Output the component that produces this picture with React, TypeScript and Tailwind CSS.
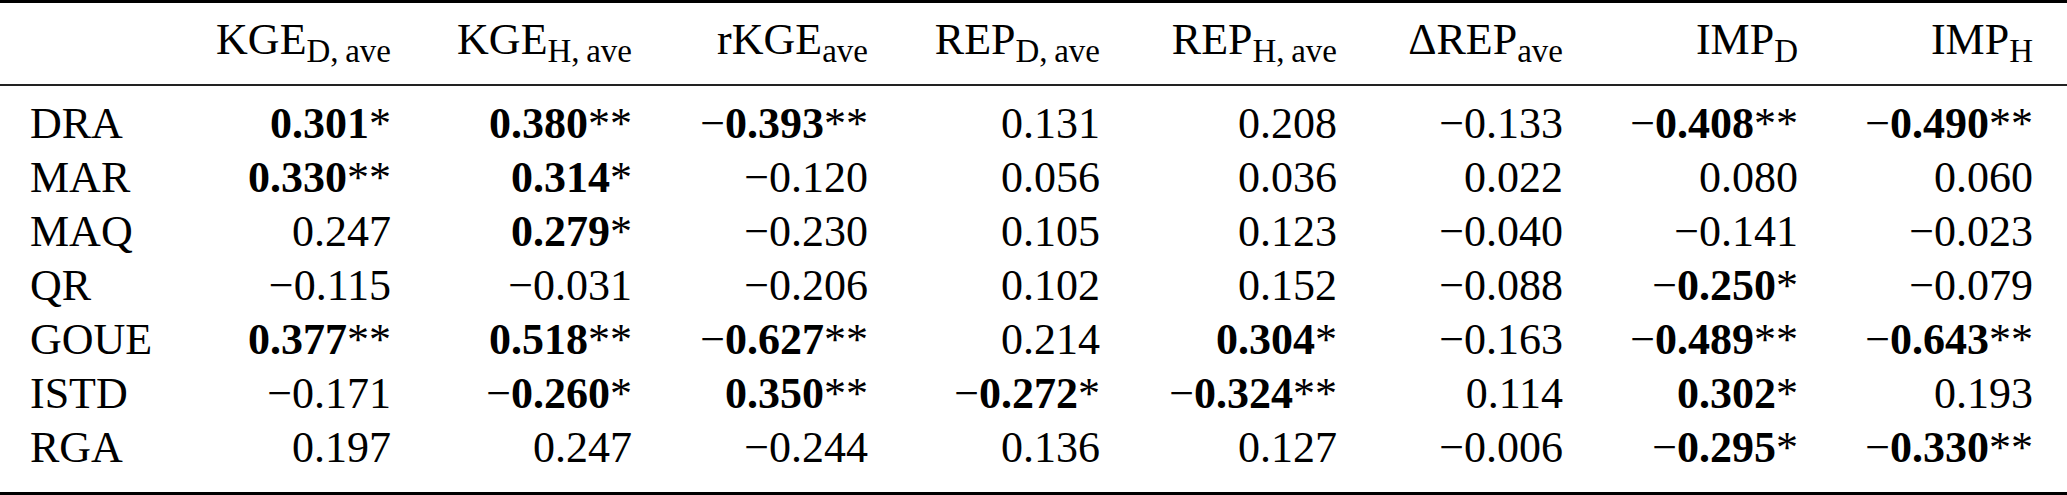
import React from "react";

type Cell = { v: string; b?: boolean; s?: string };

const cols = [
  { main: "KGE", sub: "D,\u2009ave" },
  { main: "KGE", sub: "H,\u2009ave" },
  { main: "rKGE", sub: "ave" },
  { main: "REP", sub: "D,\u2009ave" },
  { main: "REP", sub: "H,\u2009ave" },
  { main: "\u0394REP", sub: "ave" },
  { main: "IMP", sub: "D" },
  { main: "IMP", sub: "H" },
];

const c = (v: string, s?: string, b?: boolean): Cell => ({ v, s, b });

// bold = significant, s = stars
const rows: { name: string; cells: Cell[] }[] = [
  {
    name: "DRA",
    cells: [
      c("0.301", "*", true),
      c("0.380", "**", true),
      c("\u22120.393", "**", true),
      c("0.131"),
      c("0.208"),
      c("\u22120.133"),
      c("\u22120.408", "**", true),
      c("\u22120.490", "**", true),
    ],
  },
  {
    name: "MAR",
    cells: [
      c("0.330", "**", true),
      c("0.314", "*", true),
      c("\u22120.120"),
      c("0.056"),
      c("0.036"),
      c("0.022"),
      c("0.080"),
      c("0.060"),
    ],
  },
  {
    name: "MAQ",
    cells: [
      c("0.247"),
      c("0.279", "*", true),
      c("\u22120.230"),
      c("0.105"),
      c("0.123"),
      c("\u22120.040"),
      c("\u22120.141"),
      c("\u22120.023"),
    ],
  },
  {
    name: "QR",
    cells: [
      c("\u22120.115"),
      c("\u22120.031"),
      c("\u22120.206"),
      c("0.102"),
      c("0.152"),
      c("\u22120.088"),
      c("\u22120.250", "*", true),
      c("\u22120.079"),
    ],
  },
  {
    name: "GOUE",
    cells: [
      c("0.377", "**", true),
      c("0.518", "**", true),
      c("\u22120.627", "**", true),
      c("0.214"),
      c("0.304", "*", true),
      c("\u22120.163"),
      c("\u22120.489", "**", true),
      c("\u22120.643", "**", true),
    ],
  },
  {
    name: "ISTD",
    cells: [
      c("\u22120.171"),
      c("\u22120.260", "*", true),
      c("0.350", "**", true),
      c("\u22120.272", "*", true),
      c("\u22120.324", "**", true),
      c("0.114"),
      c("0.302", "*", true),
      c("0.193"),
    ],
  },
  {
    name: "RGA",
    cells: [
      c("0.197"),
      c("0.247"),
      c("\u22120.244"),
      c("0.136"),
      c("0.127"),
      c("\u22120.006"),
      c("\u22120.295", "*", true),
      c("\u22120.330", "**", true),
    ],
  },
];

const grid =
  "grid grid-cols-[150px_241px_241px_236px_232px_237px_226px_235px_235px] pr-[34px]";

const Num = ({ cell }: { cell: Cell }) => {
  const neg = cell.v.startsWith("\u2212");
  const digits = neg ? cell.v.slice(1) : cell.v;
  return (
    <span className="text-right whitespace-nowrap">
      {neg && <span>{"\u2212"}</span>}
      <span className={cell.b ? "font-bold" : ""}>{digits}</span>
      {cell.s && <span>{cell.s}</span>}
    </span>
  );
};

export default function App() {
  return (
    <div className="w-[2067px] h-[495px] bg-white text-black text-[44px] leading-[54px] overflow-hidden font-['Liberation_Serif','Times_New_Roman',serif]">
      <div className="h-[3px] bg-black" />
      {/* header */}
      <div className={`${grid} pt-[10px] pb-[17px]`}>
        <div />
        {cols.map((h, i) => (
          <div key={i} className="text-right whitespace-nowrap">
            {h.main}
            <sub>{h.sub}</sub>
          </div>
        ))}
      </div>
      <div className="h-[2px] bg-[#222]" />
      {/* body */}
      <div className="pt-[11px] pb-[17px]">
        {rows.map((r) => (
          <div key={r.name} className={grid}>
            <div className="pl-[30px]">{r.name}</div>
            {r.cells.map((cell, i) => (
              <div key={i} className="text-right">
                <Num cell={cell} />
              </div>
            ))}
          </div>
        ))}
      </div>
      <div className="h-[3px] bg-black" />
    </div>
  );
}
